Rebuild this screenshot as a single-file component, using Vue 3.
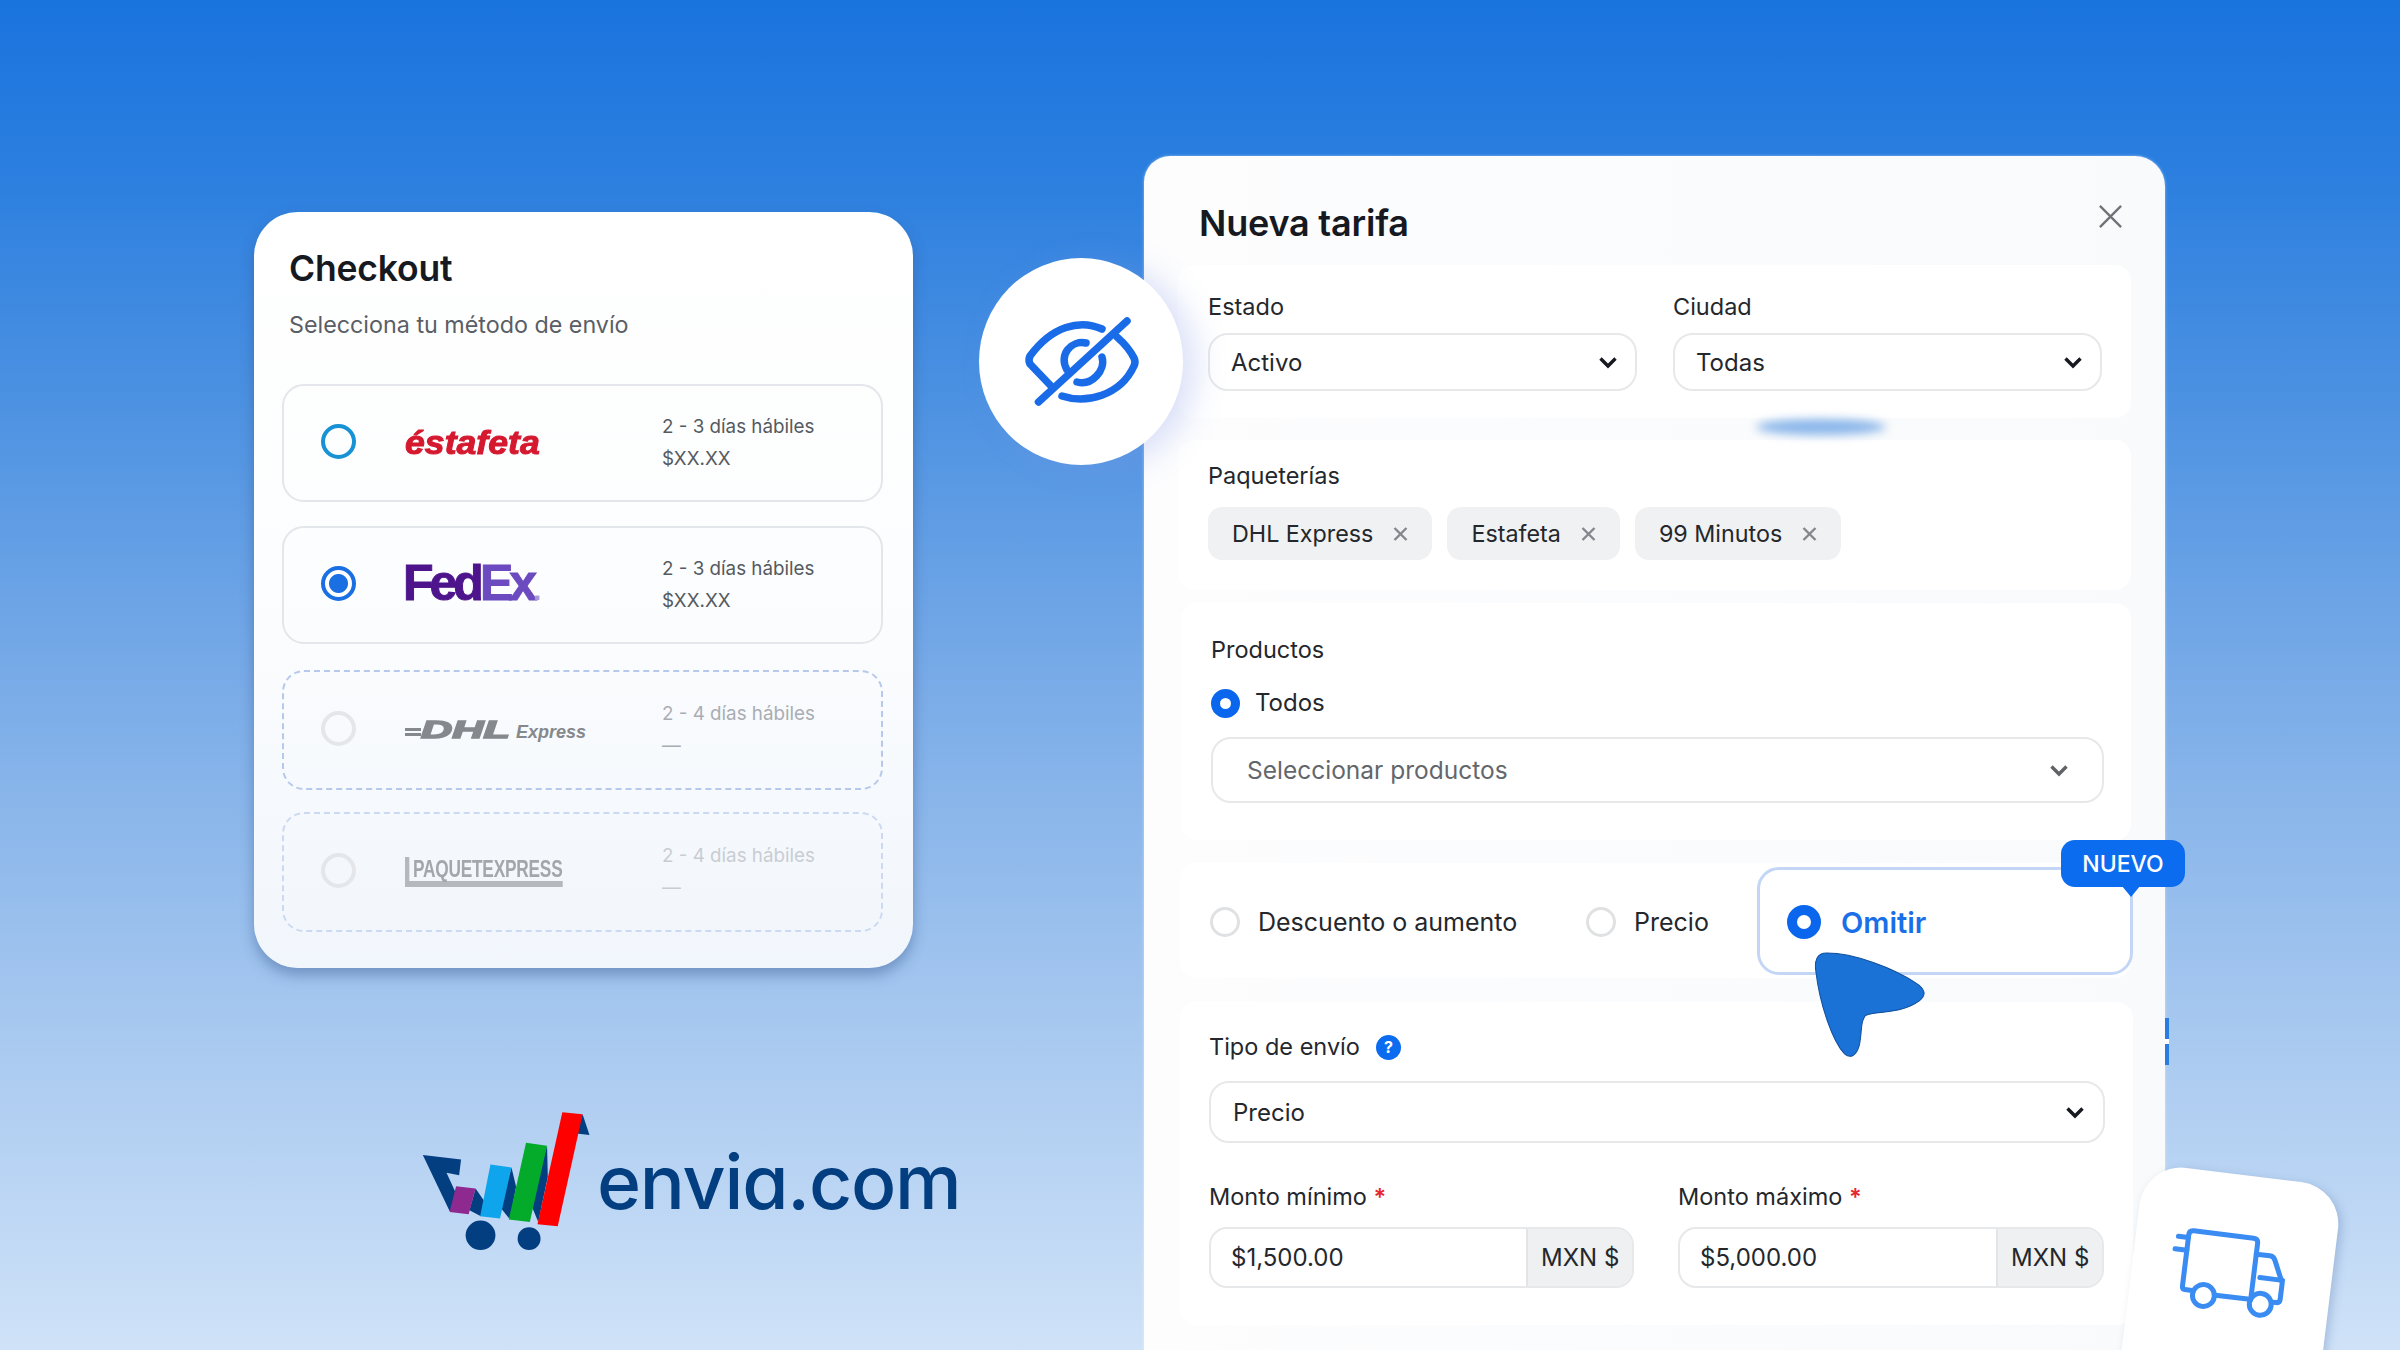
<script setup>
const rows = [
  { id: 'estafeta', days: '2 - 3 días hábiles', price: '$XX.XX', state: 'open' },
  { id: 'fedex', days: '2 - 3 días hábiles', price: '$XX.XX', state: 'on' },
  { id: 'dhl', days: '2 - 4 días hábiles', price: '—', state: 'off' },
  { id: 'paquete', days: '2 - 4 días hábiles', price: '—', state: 'off2' }
]
const chips = ['DHL Express', 'Estafeta', '99 Minutos']
</script>

<template>
  <div class="page">
    <div class="left">
      <section class="checkout">
        <h2 class="co-title">Checkout</h2>
        <p class="co-sub">Selecciona tu método de envío</p>
        <div class="co-rows">
          <div v-for="r in rows" :key="r.id" class="co-row" :class="r.state">
            <span class="co-radio"></span>
            <div class="co-logo">
              <span v-if="r.id === 'estafeta'" class="l-estafeta">éstafeta</span>
              <span v-else-if="r.id === 'fedex'" class="l-fedex">Fed<i>Ex</i><b>.</b></span>
              <span v-else-if="r.id === 'dhl'" class="l-dhl"><u></u><em>DHL</em><small>Express</small></span>
              <span v-else class="l-paq">PAQUETEXPRESS</span>
            </div>
            <div class="co-info">
              <div>{{ r.days }}</div>
              <div>{{ r.price }}</div>
            </div>
          </div>
        </div>
      </section>
      <div class="brand">
        <svg class="cart" viewBox="50 90 450 425" preserveAspectRatio="none">
          <path fill="#033e80" d="M60 225 L160 238 L155 285 L122 278 L165 385 L130 392 Z" />
          <path fill="#033e80" d="M198 325 L225 370 L212 408 L182 390 Z" />
          <path fill="#033e80" d="M292 262 L304 320 L288 418 L262 380 Z" />
          <path fill="#033e80" d="M385 197 L387 290 L362 425 L342 370 Z" />
          <path fill="#033e80" d="M478 103 L496 165 L462 160 Z" />
          <path fill="#8e2a8f" d="M147 318 L198 325 L180 402 L130 395 Z" />
          <path fill="#0ea5ec" d="M237 253 L292 262 L262 415 L210 408 Z" />
          <path fill="#04ab2a" d="M330 188 L385 197 L340 425 L285 418 Z" />
          <path fill="#ff0000" d="M425 97 L478 103 L413 438 L360 432 Z" />
          <ellipse fill="#033e80" cx="211" cy="465" rx="39" ry="44" />
          <ellipse fill="#033e80" cx="338" cy="475" rx="30" ry="34" />
        </svg>
        <span class="brand-name">envia.com</span>
      </div>
    </div>

    <section class="modal">
      <header class="m-head">
        <h2>Nueva tarifa</h2>
        <svg class="m-close" viewBox="0 0 26 26"><path d="M2 2 L24 24 M24 2 L2 24" /></svg>
      </header>

      <div class="sec sec1">
        <div class="two">
          <label class="field">
            <span class="lab">Estado</span>
            <div class="sel"><span>Activo</span><svg class="chev" viewBox="0 0 20 13"><path d="M2.5 2.5 L10 10 L17.5 2.5" /></svg></div>
          </label>
          <label class="field">
            <span class="lab">Ciudad</span>
            <div class="sel"><span>Todas</span><svg class="chev" viewBox="0 0 20 13"><path d="M2.5 2.5 L10 10 L17.5 2.5" /></svg></div>
          </label>
        </div>
      </div>

      <div class="sec sec2">
        <span class="lab">Paqueterías</span>
        <div class="chips">
          <span v-for="c in chips" :key="c" class="chip">{{ c }}<svg viewBox="0 0 16 16"><path d="M2 2 L14 14 M14 2 L2 14" /></svg></span>
        </div>
      </div>

      <div class="sec sec3">
        <span class="lab">Productos</span>
        <div class="todos"><span class="dot"></span>Todos</div>
        <div class="sel big"><span>Seleccionar productos</span><svg class="chev grey" viewBox="0 0 20 13"><path d="M2.5 2.5 L10 10 L17.5 2.5" /></svg></div>
      </div>
      <div class="peek"><span>Valores</span></div>

      <div class="sec sec4">
        <div class="opt first"><span class="ring"></span>Descuento o aumento</div>
        <div class="opt second"><span class="ring"></span>Precio</div>
        <div class="omit"><span class="dot large"></span>Omitir
          <span class="badge">NUEVO</span>
        </div>
      </div>

      <div class="sec sec5">
        <div class="lab tipo">Tipo de envío <span class="help">?</span></div>
        <div class="sel tall"><span>Precio</span><svg class="chev" viewBox="0 0 20 13"><path d="M2.5 2.5 L10 10 L17.5 2.5" /></svg></div>
        <div class="amounts">
          <div class="amount a1">
            <div class="lab">Monto mínimo <b>*</b></div>
            <div class="inp"><span class="val">$1,500.00</span><span class="cur">MXN $</span></div>
          </div>
          <div class="amount a2">
            <div class="lab">Monto máximo <b>*</b></div>
            <div class="inp"><span class="val">$5,000.00</span><span class="cur">MXN $</span></div>
          </div>
        </div>
      </div>
      <div class="edge"></div>
    </section>

    <div class="blurmark"></div>

    <div class="eye">
      <svg viewBox="0 0 125 100">
        <path d="M82 19 C60 9 32 16 10 46 Q8 50 10 54 L32 77" />
        <path d="M97 27 C105 34 111 42 114 48 Q116 52 114 56 C100 86 66 94 42 86" />
        <path d="M66 33 C52 30 38 44 47 60" />
        <path d="M82 47 C86 60 72 76 57 72" />
        <path d="M18.5 92 L107 11" />
      </svg>
    </div>

    <svg class="pointer" viewBox="0 0 120 112" preserveAspectRatio="none">
      <path d="M12 5 C2 5 -1 12 1 24 C5 56 18 92 30 104 C36 109 42 106 45 96 C48 84 46 70 52 66 C62 62 88 65 106 52 C114 46 112 40 102 34 C80 20 40 5 12 5 Z" />
    </svg>

    <div class="truck">
      <svg viewBox="0 0 116 92">
        <path d="M16 70 H8 Q5 70 5 66 V10 Q5 5 10 5 H76 Q81 5 81 10 V72" />
        <path d="M42 72 H80" />
        <path d="M81 22 H96 Q100 22 102 26 L113 50 V68 Q113 72 109 72 H105" />
        <path d="M88 47 H113" />
        <circle cx="29" cy="74" r="12" />
        <circle cx="92" cy="76" r="12" />
        <path d="M-6 13 H5 M-8 27 H5" />
      </svg>
    </div>
  </div>
</template>

<style>
html, body { margin: 0; padding: 0; }
</style>

<style scoped>
* { box-sizing: border-box; }
.page {
  position: relative;
  width: 2400px;
  height: 1350px;
  overflow: hidden;
  display: flex;
  align-items: flex-start;
  padding-left: 254px;
  font-family: Inter, "Liberation Sans", sans-serif;
  color: #16191f;
  background: linear-gradient(180deg, #1a74de 0%, #2a7edf 12%, #4d92e2 30%, #7cade8 52%, #a5c7ef 75%, #cfe2f8 100%);
}
.left { width: 659px; margin-top: 212px; flex: none; }
.checkout {
  height: 756px;
  border-radius: 44px;
  background: linear-gradient(180deg, #ffffff 0%, #fcfdfe 50%, #f1f6fc 100%);
  box-shadow: 0 7px 14px rgba(50, 85, 140, .45);
  padding: 33px 30px 0 28px;
}
.co-title { margin: 0 0 0 7px; font-size: 35.5px; line-height: 48px; font-weight: 600; letter-spacing: -.2px; }
.co-sub { margin: 16px 0 0 7px; font-size: 23.3px; line-height: 32px; color: #5a5e66; }
.co-rows { margin-top: 43px; display: flex; flex-direction: column; gap: 24px; }
.co-row {
  height: 118px;
  border: 2px solid #e3e6ea;
  border-radius: 22px;
  display: flex;
  align-items: center;
  padding-left: 37px;
}
.co-row.off, .co-row.off2 { border: 2px dashed #b6c8ec; height: 120px; }
.co-row.off { margin-top: 2px; }
.co-row.off2 { border-color: #ccd9f2; margin-top: -2px; }
.co-radio {
  width: 35px;
  height: 35px;
  border-radius: 50%;
  border: 4px solid #1792d4;
  flex: none;
  margin-bottom: 4px;
}
.on .co-radio {
  border: 4px solid #1a6fe2;
  background: radial-gradient(circle, #1a6fe2 0 9px, #fff 10px);
}
.off .co-radio, .off2 .co-radio { border-color: #e4e6e9; }
.co-logo { width: 306px; padding-left: 49px; flex: none; height: 60px; display: flex; align-items: center; white-space: nowrap; }
.co-info { font-size: 18.8px; line-height: 32px; color: #555a60; }
.off .co-info { color: #a9adb3; }
.off2 .co-info { color: #c9cdd3; }

.l-estafeta { font: italic 700 33px "Liberation Sans", sans-serif; color: #d5192f; -webkit-text-stroke: 1px #d5192f; transform: scaleX(1.08); transform-origin: left; }
.l-fedex { font: 700 50px "Liberation Sans", sans-serif; letter-spacing: -4px; color: #4d148c; -webkit-text-stroke: 1px #4d148c; margin: 0 0 4px -2px; }
.l-fedex i { font-style: normal; color: #6b4bbf; -webkit-text-stroke: 1px #6b4bbf; }
.l-fedex b { color: #a79ad4; font-size: 30px; -webkit-text-stroke: 0; }
.l-dhl { color: #85888c; display: flex; align-items: baseline; }
.l-dhl u { width: 16px; height: 10px; flex: none; background: repeating-linear-gradient(180deg, #85888c 0 3px, transparent 3px 5px); }
.l-dhl em { font: italic 700 24px "Liberation Sans", sans-serif; -webkit-text-stroke: 1.5px #85888c; transform: scaleX(1.8); transform-origin: left; width: 95px; }
.l-dhl small { font: italic 700 18px "Liberation Sans", sans-serif; }
.l-paq { font: 700 24px "Liberation Sans", sans-serif; color: #a3a6ab; transform: scaleX(.72); transform-origin: left; border-left: 6px solid #b5b8bc; border-bottom: 6px solid #b5b8bc; padding-left: 5px; line-height: 24px; letter-spacing: -.3px; }

.brand { display: flex; margin-top: 142px; margin-left: 165px; align-items: flex-start; position: relative; height: 142px; }
.cart { width: 172px; height: 142px; flex: none; }
.brand-name {
  position: relative;
  margin-left: 6px;
  margin-top: 22px;
  font-size: 75px;
  line-height: 100px;
  font-weight: 500;
  color: #033e80;
  font-feature-settings: "cv11";
  letter-spacing: -1.2px;
}

.modal {
  width: 1021px;
  height: 1230px;
  flex: none;
  margin-left: 231px;
  margin-top: 156px;
  padding: 0 34px;
  border-radius: 26px 30px 0 0;
  background: linear-gradient(90deg, #fdfdfe, #f8fafb);
  box-shadow: 0 0 3px rgba(255, 255, 255, .5);
  position: relative;
}
.m-head { height: 109px; display: flex; justify-content: space-between; padding: 42px 0 0 21px; position: relative; }
.m-head h2 { margin: 0; font-size: 36px; line-height: 50px; font-weight: 600; letter-spacing: -.2px; }
.m-close { width: 25px; height: 25px; margin: 6px 8px 0 0; }
.m-close path { stroke: #6f7276; stroke-width: 2.4; fill: none; }
.sec { background: #fff; border-radius: 16px; width: 953px; }
.lab { font-size: 23.5px; line-height: 32px; color: #24272c; display: block; }
.sec1 { height: 153px; margin-bottom: 22px; padding: 26px 30px 0 30px; }
.two { display: grid; grid-template-columns: 429px 429px; column-gap: 36px; }
.field { display: block; }
.field .lab { margin-bottom: 10px; }
.sel {
  height: 58px;
  border: 2px solid #e7e8ea;
  border-radius: 20px;
  background: #fff;
  display: flex;
  align-items: center;
  justify-content: space-between;
  padding: 0 17px 0 21px;
  font-size: 24px;
  color: #24272c;
}
.chev { width: 20px; height: 13px; flex: none; }
.chev path { fill: none; stroke: #16191f; stroke-width: 3.4; }
.chev.grey path { stroke: #5f6367; }
.sec2 { height: 150px; margin-bottom: 13px; padding: 20px 0 0 30px; }
.chips { display: flex; gap: 15px; margin-top: 15px; }
.chip {
  height: 53px;
  border-radius: 14px;
  background: #f0f1f3;
  display: flex;
  align-items: center;
  padding: 0 23px 0 24px;
  font-size: 23.3px;
  color: #24272c;
}
.chip svg { width: 17px; height: 16px; margin-left: 19px; }
.chip svg path { stroke: #84878b; stroke-width: 2.4; fill: none; }
.sec3 { height: 237px; margin-left: 3px; width: 950px; padding: 31px 27px 0 30px; position: relative; }
.todos { display: flex; align-items: center; gap: 15px; margin-top: 21px; font-size: 24px; line-height: 32px; color: #24272c; }
.dot { width: 29px; height: 29px; border-radius: 50%; border: 9px solid #0b66ee; background: #fff; flex: none; }
.dot.large { width: 34px; height: 34px; border-width: 10px; }
.sel.big { height: 66px; margin-top: 18px; padding: 0 33px 0 34px; color: #63676c; font-size: 24.5px; }
.peek { height: 23px; margin-left: 56px; overflow: hidden; }
.peek span { display: block; font-size: 24px; line-height: 32px; color: #666; margin-top: -28px; }
.sec4 { height: 115px; margin-left: 2px; width: 951px; margin-bottom: 24px; display: flex; align-items: center; position: relative; font-size: 25px; color: #24272c; }
.opt { display: flex; align-items: center; gap: 18px; position: absolute; top: 44px; line-height: 30px; }
.opt.first { left: 30px; }
.opt.second { left: 406px; }
.ring { width: 30px; height: 30px; border-radius: 50%; border: 3px solid #dfe1e3; flex: none; background: #fff; }
.omit {
  position: absolute;
  left: 577px;
  top: 4px;
  width: 376px;
  height: 108px;
  border: 3px solid #c4d6f5;
  border-radius: 22px;
  display: flex;
  align-items: center;
  gap: 20px;
  padding-left: 27px;
  padding-top: 2px;
  font-size: 29px;
  font-weight: 600;
  color: #1a6fe8;
}
.badge {
  position: absolute;
  left: 301px;
  top: -30px;
  width: 124px;
  height: 47px;
  border-radius: 14px;
  background: #0b6cf0;
  color: #fff;
  font-size: 23px;
  font-weight: 500;
  display: flex;
  align-items: center;
  justify-content: center;
}
.badge::after {
  content: "";
  position: absolute;
  left: 61px;
  bottom: -10px;
  border-left: 9px solid transparent;
  border-right: 9px solid transparent;
  border-top: 11px solid #0b6cf0;
}
.sec5 { height: 323px; width: 953px; margin-left: 2px; padding: 29px 28px 0 29px; }
.tipo { display: flex; align-items: center; gap: 16px; }
.help { width: 25px; height: 25px; border-radius: 50%; background: #0b6cf0; color: #fff; font-size: 16px; font-weight: 700; display: flex; align-items: center; justify-content: center; }
.sel.tall { height: 62px; margin-top: 18px; padding: 0 18px 0 22px; }
.amounts { display: flex; margin-top: 38px; }
.a1 { width: 425px; margin-right: 44px; }
.a2 { width: 426px; }
.amount b { color: #e5262e; font-weight: 600; }
.inp {
  margin-top: 14px;
  height: 61px;
  border: 2px solid #e7e8ea;
  border-radius: 18px;
  display: flex;
  overflow: hidden;
  font-size: 24px;
  color: #24272c;
}
.val { flex: 1; display: flex; align-items: center; padding-left: 20px; }
.cur { width: 106px; flex: none; background: #eef0f2; border-left: 2px solid #e3e4e6; display: flex; align-items: center; padding-left: 13px; }
.edge {
  position: absolute;
  left: 1021px;
  top: 862px;
  width: 4px;
  height: 47px;
  background: linear-gradient(180deg, #2a7de0 0 45%, #fff 45% 55%, #2a7de0 55%);
}

.blurmark {
  position: absolute;
  left: 1756px;
  top: 419px;
  width: 130px;
  height: 16px;
  border-radius: 50%;
  background: #8ab6ea;
  filter: blur(5px);
}
.eye {
  position: absolute;
  left: 979px;
  top: 258px;
  width: 204px;
  height: 207px;
  border-radius: 50%;
  background: #fff;
  box-shadow: 14px 4px 30px rgba(130, 150, 230, .28);
}
.eye svg { position: absolute; left: 41px; top: 52px; width: 125px; height: 100px; }
.eye path { fill: none; stroke: #1a6be8; stroke-width: 7.5; stroke-linecap: round; stroke-linejoin: round; }
.pointer { position: absolute; left: 1815px; top: 948px; width: 118px; height: 114px; overflow: visible; }
.pointer path { fill: #1b72d6; stroke: #0f4f9e; stroke-width: 1; }
.truck {
  position: absolute;
  left: 2128px;
  top: 1174px;
  width: 200px;
  height: 260px;
  border-radius: 42px;
  background: #fff;
  transform: rotate(7deg);
  box-shadow: 4px 2px 8px rgba(90, 120, 170, .3);
}
.truck svg { position: absolute; left: 48px; top: 57px; width: 106px; height: 84px; overflow: visible; }
.truck path, .truck circle { fill: none; stroke: #3a8cf2; stroke-width: 5.5; stroke-linecap: round; stroke-linejoin: round; }
</style>
